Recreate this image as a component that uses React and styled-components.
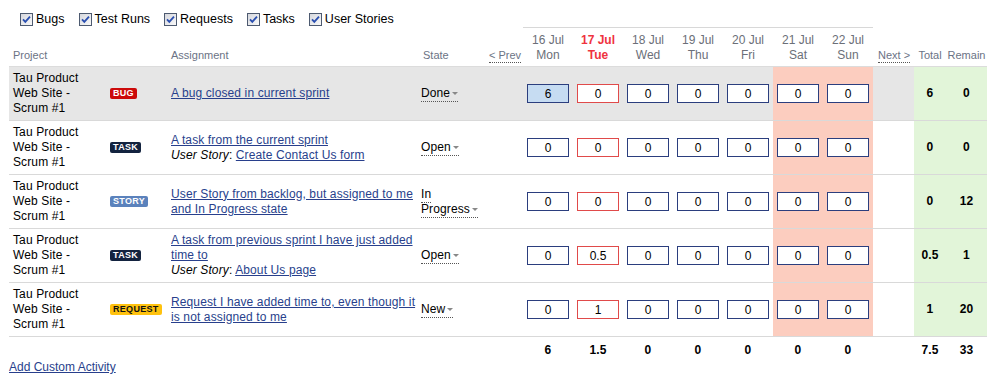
import React from "react";
import styled, { createGlobalStyle } from "styled-components";

const GlobalStyle = createGlobalStyle`
  body {
    margin: 0;
    background: #fff;
    font-family: "Liberation Sans", Arial, sans-serif;
    font-size: 12px;
    color: #000;
  }
`;

const days = [
  { date: "16 Jul", day: "Mon" },
  { date: "17 Jul", day: "Tue", today: true },
  { date: "18 Jul", day: "Wed" },
  { date: "19 Jul", day: "Thu" },
  { date: "20 Jul", day: "Fri" },
  { date: "21 Jul", day: "Sat", weekend: true },
  { date: "22 Jul", day: "Sun", weekend: true },
];

const zeros = ["0", "0", "0", "0", "0", "0", "0"];

const rows = [
  {
    type: "BUG",
    title: "A bug closed in current sprint",
    state: "Done",
    hours: ["6", "0", "0", "0", "0", "0", "0"],
    focused: 0,
    total: "6",
    remain: "0",
    hover: true,
  },
  {
    type: "TASK",
    title: "A task from the current sprint",
    story: "Create Contact Us form",
    state: "Open",
    hours: zeros,
    total: "0",
    remain: "0",
  },
  {
    type: "STORY",
    title: "User Story from backlog, but assigned to me and In Progress state",
    state: "In Progress",
    hours: zeros,
    total: "0",
    remain: "12",
  },
  {
    type: "TASK",
    title: "A task from previous sprint I have just added time to",
    story: "About Us page",
    state: "Open",
    hours: ["0", "0.5", "0", "0", "0", "0", "0"],
    total: "0.5",
    remain: "1",
  },
  {
    type: "REQUEST",
    title: "Request I have added time to, even though it is not assigned to me",
    state: "New",
    hours: ["0", "1", "0", "0", "0", "0", "0"],
    total: "1",
    remain: "20",
  },
];

const footer = ["6", "1.5", "0", "0", "0", "0", "0"];

const filters = ["Bugs", "Test Runs", "Requests", "Tasks", "User Stories"];

const badgeColors = {
  BUG: { bg: "#cc0a0a", fg: "#fff" },
  TASK: { bg: "#13233f", fg: "#fff" },
  STORY: { bg: "#5b82bc", fg: "#fff" },
  REQUEST: { bg: "#ffc20e", fg: "#111" },
};

const Page = styled.div`
  padding: 0 0 0 9px;
`;

const Filters = styled.div`
  display: flex;
  align-items: center;
  gap: 14px;
  padding: 12px 0 0 11px;
  height: 15px;
`;

const Filter = styled.label`
  display: flex;
  align-items: center;
  gap: 3px;
  font-size: 12.5px;
  line-height: 15px;
  color: #000;
`;

const Table = styled.table`
  border-collapse: collapse;
  table-layout: fixed;
  width: 978px;
  letter-spacing: 0.12px;
`;

const Head = styled.th`
  font-weight: normal;
  font-size: ${(p) => (p.$small ? "11px" : "12px")};
  line-height: 15px;
  color: #6b7385;
  text-align: ${(p) => p.$align || "center"};
  vertical-align: bottom;
  padding: 5px 0 3px ${(p) => (p.$indent != null ? `${p.$indent}px` : "0")};
  border-top: ${(p) => (p.$day ? "1px solid #d8d8d8" : "none")};
  letter-spacing: 0;
`;

const DayHead = styled.span`
  display: block;
  color: ${(p) => (p.$today ? "#ef3340" : "#6b6f78")};
  font-weight: ${(p) => (p.$today ? "bold" : "normal")};
`;

const Pager = styled.span`
  color: #6b7385;
  border-bottom: 1px dotted #555;
  padding-bottom: 1px;
`;

const HeadRow = styled.tr`
  border-bottom: 1px solid #dcdcdc;
`;

const Row = styled.tr`
  background: ${(p) => (p.$hover ? "#e6e6e6" : "#fff")};
  border-bottom: 1px solid #d9d9d9;
`;

const Cell = styled.td`
  padding: 4px ${(p) => p.$right ?? 0}px 4px ${(p) => p.$left ?? 0}px;
  line-height: 15px;
  vertical-align: middle;
  text-align: ${(p) => p.$align || "left"};
  font-weight: ${(p) => (p.$bold ? "bold" : "normal")};
  background: ${(p) =>
    p.$tone === "weekend" ? "#fccdbf" : p.$tone === "sum" ? "#e2f5d9" : "transparent"};
`;

const Badge = styled.span`
  display: inline-block;
  height: 11px;
  line-height: 11px;
  padding: 0 3px;
  border-radius: 2px;
  font-size: 9px;
  font-weight: bold;
  letter-spacing: 0.3px;
  background: ${(p) => badgeColors[p.$type].bg};
  color: ${(p) => badgeColors[p.$type].fg};
  vertical-align: middle;
`;

const Link = styled.a`
  color: #283f8c;
  text-decoration: underline;
  cursor: pointer;
`;

const StoryLabel = styled.em`
  font-style: italic;
`;

const StateLink = styled.span`
  border-bottom: 1px dotted #555;
  padding-bottom: 1px;
`;

const Caret = styled.span`
  display: inline-block;
  width: 0;
  height: 0;
  margin-left: 2px;
  border-left: 3px solid transparent;
  border-right: 3px solid transparent;
  border-top: 3px solid #888;
  vertical-align: middle;
`;

const Nowrap = styled.span`
  white-space: nowrap;
`;

const HourInput = styled.input`
  box-sizing: border-box;
  width: 42px;
  height: 19px;
  margin: 0 0 0 4px;
  padding: 0;
  border: 1px solid ${(p) => (p.$today ? "#e04a4a" : "#2b3e7e")};
  background: ${(p) => (p.$focused ? "#c6dcf2" : "#fff")};
  font-family: "Liberation Sans", Arial, sans-serif;
  font-size: 12px;
  color: #000;
  text-align: center;
  vertical-align: middle;
  outline: none;
`;

const FooterRow = styled.tr``;

const FooterCell = styled.td`
  padding: 6px 0 2px;
  line-height: 15px;
  text-align: center;
  font-weight: bold;
`;

const AddLink = styled(Link)`
  display: block;
  line-height: 15px;
  font-size: 12px;
`;

function CheckBox() {
  return (
    <svg width="13" height="13" viewBox="0 0 13 13">
      <defs>
        <linearGradient id="cbg" x1="0" y1="0" x2="1" y2="1">
          <stop offset="0" stopColor="#d4d6dc" />
          <stop offset="1" stopColor="#fafafa" />
        </linearGradient>
      </defs>
      <rect x="0.5" y="0.5" width="12" height="12" fill="url(#cbg)" stroke="#4d5a70" />
      <path d="M3 6.3 L5.3 8.8 L10 3.6" fill="none" stroke="#2a4fb0" strokeWidth="1.8" />
    </svg>
  );
}

function State({ text }) {
  const words = text.split(" ");
  const last = words.pop();
  return (
    <StateLink>
      {words.length ? words.join(" ") + " " : ""}
      <Nowrap>
        {last}
        <Caret />
      </Nowrap>
    </StateLink>
  );
}

export default function App() {
  return (
    <Page>
      <GlobalStyle />
      <Filters>
        {filters.map((f) => (
          <Filter key={f}>
            <CheckBox />
            {f}
          </Filter>
        ))}
      </Filters>
      <Table>
        <colgroup>
          <col style={{ width: 96 }} />
          <col style={{ width: 63 }} />
          <col style={{ width: 250 }} />
          <col style={{ width: 66 }} />
          <col style={{ width: 39 }} />
          {days.map((d) => (
            <col key={d.date} style={{ width: 50 }} />
          ))}
          <col style={{ width: 41 }} />
          <col style={{ width: 32 }} />
          <col style={{ width: 41 }} />
        </colgroup>
        <thead>
          <HeadRow>
            <Head $small $align="left" $indent={4}>Project</Head>
            <Head $small />
            <Head $small $align="left" $indent={3}>Assignment</Head>
            <Head $small $align="left" $indent={5}>State</Head>
            <Head $small $align="left" $indent={5}>
              <Pager>&lt; Prev</Pager>
            </Head>
            {days.map((d) => (
              <Head key={d.date} $day>
                <DayHead $today={d.today}>{d.date}</DayHead>
                <DayHead $today={d.today}>{d.day}</DayHead>
              </Head>
            ))}
            <Head $small $align="left" $indent={5}>
              <Pager>Next &gt;</Pager>
            </Head>
            <Head $small>Total</Head>
            <Head $small>Remain</Head>
          </HeadRow>
        </thead>
        <tbody>
          {rows.map((r, i) => (
            <Row key={i} $hover={r.hover}>
              <Cell $left={4} $right={4}>Tau Product Web Site - Scrum #1</Cell>
              <Cell $left={5}>
                <Badge $type={r.type}>{r.type}</Badge>
              </Cell>
              <Cell $left={3} $right={1}>
                <Link>{r.title}</Link>
                {r.story && (
                  <div>
                    <StoryLabel>User Story</StoryLabel>: <Link>{r.story}</Link>
                  </div>
                )}
              </Cell>
              <Cell $left={3}>
                <State text={r.state} />
              </Cell>
              <Cell />
              {days.map((d, j) => (
                <Cell key={d.date} $tone={d.weekend ? "weekend" : undefined}>
                  <HourInput
                    readOnly
                    defaultValue={r.hours[j]}
                    $today={d.today}
                    $focused={r.focused === j}
                  />
                </Cell>
              ))}
              <Cell />
              <Cell $tone="sum" $align="center" $bold>
                {r.total}
              </Cell>
              <Cell $tone="sum" $align="center" $bold>
                {r.remain}
              </Cell>
            </Row>
          ))}
          <FooterRow>
            <FooterCell colSpan={5} />
            {footer.map((v, j) => (
              <FooterCell key={j}>{v}</FooterCell>
            ))}
            <FooterCell />
            <FooterCell>7.5</FooterCell>
            <FooterCell>33</FooterCell>
          </FooterRow>
        </tbody>
      </Table>
      <AddLink>Add Custom Activity</AddLink>
    </Page>
  );
}
